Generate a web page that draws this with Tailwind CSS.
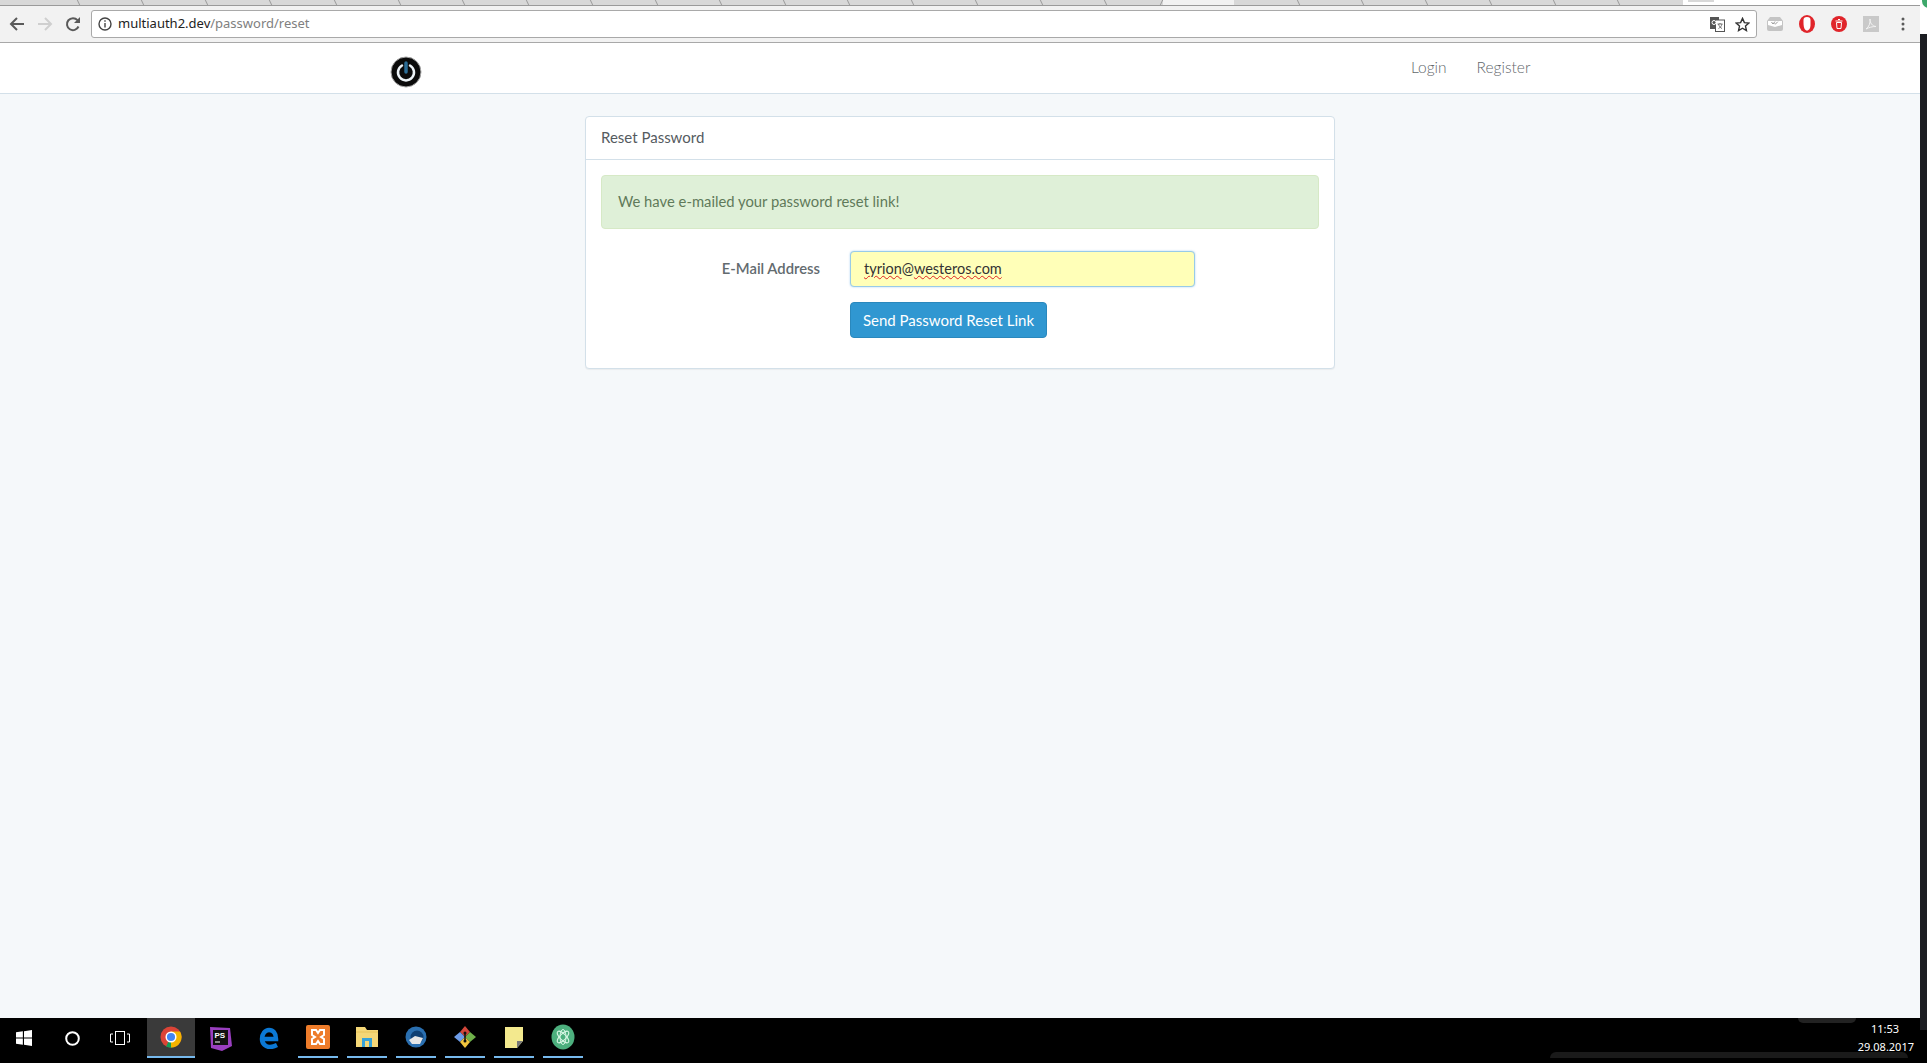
<!DOCTYPE html>
<html lang="en">
<head>
  <meta charset="UTF-8">
  <title>Reset Password</title>
  <script src="https://cdn.jsdelivr.net/npm/@tailwindcss/browser@4"></script>
</head>
<body class="h-[1063px] w-[1927px] overflow-hidden flex flex-col bg-[#f5f8fa] font-['Lato','Liberation_Sans',sans-serif]">

  <!-- Tab strip -->
  <div class="h-[6px] flex items-stretch bg-white border-b border-[#9a9a9a] shrink-0 overflow-hidden">
    <div class="w-[1163px] flex bg-[#d8d8d8] overflow-hidden">
      <div class="w-[79px] shrink-0 border-r border-[#9a9a9a] skew-x-[25deg]"></div>
      <div class="w-[64.2px] shrink-0 border-r border-[#9a9a9a] skew-x-[25deg]"></div>
      <div class="w-[64.2px] shrink-0 border-r border-[#9a9a9a] skew-x-[25deg]"></div>
      <div class="w-[64.2px] shrink-0 border-r border-[#9a9a9a] skew-x-[25deg]"></div>
      <div class="w-[64.2px] shrink-0 border-r border-[#9a9a9a] skew-x-[25deg]"></div>
      <div class="w-[64.2px] shrink-0 border-r border-[#9a9a9a] skew-x-[25deg]"></div>
      <div class="w-[64.2px] shrink-0 border-r border-[#9a9a9a] skew-x-[25deg]"></div>
      <div class="w-[64.2px] shrink-0 border-r border-[#9a9a9a] skew-x-[25deg]"></div>
      <div class="w-[64.2px] shrink-0 border-r border-[#9a9a9a] skew-x-[25deg]"></div>
      <div class="w-[64.2px] shrink-0 border-r border-[#9a9a9a] skew-x-[25deg]"></div>
      <div class="w-[64.2px] shrink-0 border-r border-[#9a9a9a] skew-x-[25deg]"></div>
      <div class="w-[64.2px] shrink-0 border-r border-[#9a9a9a] skew-x-[25deg]"></div>
      <div class="w-[64.2px] shrink-0 border-r border-[#9a9a9a] skew-x-[25deg]"></div>
      <div class="w-[64.2px] shrink-0 border-r border-[#9a9a9a] skew-x-[25deg]"></div>
      <div class="w-[64.2px] shrink-0 border-r border-[#9a9a9a] skew-x-[25deg]"></div>
      <div class="w-[64.2px] shrink-0 border-r border-[#9a9a9a] skew-x-[25deg]"></div>
      <div class="w-[64.2px] shrink-0 border-r border-[#9a9a9a] skew-x-[25deg]"></div>
      <div class="w-[56px] shrink-0 border-r border-[#9a9a9a] -skew-x-[25deg]"></div>
    </div>
    <div class="w-[71px] bg-[#f2f2f2]"></div>
    <div class="w-[449px] flex bg-[#d8d8d8] overflow-hidden">
      <div class="w-[65px] shrink-0 border-r border-[#9a9a9a] skew-x-[25deg]"></div>
      <div class="w-[64px] shrink-0 border-r border-[#9a9a9a] skew-x-[25deg]"></div>
      <div class="w-[64px] shrink-0 border-r border-[#9a9a9a] skew-x-[25deg]"></div>
      <div class="w-[64px] shrink-0 border-r border-[#9a9a9a] skew-x-[25deg]"></div>
      <div class="w-[64px] shrink-0 border-r border-[#9a9a9a] skew-x-[25deg]"></div>
      <div class="w-[64px] shrink-0 border-r border-[#9a9a9a] skew-x-[25deg]"></div>
      <div class="w-[64px] shrink-0"></div>
    </div>
    <div class="flex-1 pl-[5px]"><div class="w-[26px] h-[2px] bg-[#d8d8d8]"></div></div>
  </div>

  <!-- Browser toolbar -->
  <div class="h-[37px] shrink-0 flex items-center bg-[#f2f2f2] border-b border-[#a8a8a8]">
    <div class="w-[91px] flex items-center pl-[9px] gap-[12px]">
      <svg width="16" height="16" viewBox="0 0 16 16" fill="none" stroke="#5a5a5a" stroke-width="2"><path d="M15 8H2M8 2L2 8l6 6"/></svg>
      <svg width="16" height="16" viewBox="0 0 16 16" fill="none" stroke="#cfcfcf" stroke-width="2"><path d="M1 8h13M8 2l6 6-6 6"/></svg>
      <svg width="16" height="16" viewBox="0 0 16 16" fill="none" stroke="#5a5a5a" stroke-width="2"><path d="M13.500 10.500A6 6 0 1 1 12.500 4.200"/><path d="M15 1v6H9z" fill="#5a5a5a" stroke="none"/></svg>
    </div>
    <div class="w-[1666px] h-[28px] bg-white border border-[#a9a9a9] rounded-[3px] flex items-center pl-[6px] pr-[6px] text-[13px] font-['Noto_Sans',sans-serif]">
      <svg width="14" height="14" viewBox="0 0 14 14" fill="none" stroke="#444" stroke-width="1.400"><circle cx="7" cy="7" r="6"/><path d="M7 6v4.500M7 3.200v1.500"/></svg>
      <span class="ml-[6px] text-[#222]">multiauth2.dev</span><span class="text-[#808080]">/password/reset</span>
      <div class="ml-auto flex items-center gap-[10px]">
        <svg width="15" height="15" viewBox="0 0 15 15"><rect x="0" y="0" width="9" height="12" fill="#555"/><rect x="5.500" y="3" width="9" height="11.500" fill="#fff" stroke="#555"/><path d="M7.500 7h5M10 6v1M8.500 7c.5 2 2 4 3.500 4.500M12 7c-.5 2-2 4-3.500 4.500" stroke="#555" stroke-width=".8" fill="none"/><circle cx="4" cy="5.500" r="2" fill="none" stroke="#fff"/></svg>
        <svg width="15" height="15" viewBox="0 0 16 16" fill="none" stroke="#333" stroke-width="1.500"><path d="M8 1.500l2 4.500 4.800.5-3.600 3.200 1 4.800L8 12l-4.200 2.500 1-4.800L1.200 6.500 6 6z"/></svg>
      </div>
    </div>
    <div class="w-[163px] flex items-center pl-[10px] gap-[16px]">
      <svg width="16" height="16" viewBox="0 0 16 16"><path d="M0 5l3-4h10l3 4v8a2 2 0 0 1-2 2H2a2 2 0 0 1-2-2z" fill="#c4c4c4"/><path d="M1 5h14v4l-7 2-7-2z" fill="#fff"/><path d="M4.500 6l1.500 2 2-2.500M7.500 7.500l.8.7 2.500-2.500" stroke="#999" fill="none"/></svg>
      <svg width="16" height="18" viewBox="0 0 16 18"><ellipse cx="8" cy="9" rx="8" ry="9" fill="#e0252b"/><path d="M4.500 8V5c0-2 1-3 3.500-3s3.500 1 3.500 3v5c0 3-1.500 5.500-3.500 5.500S4.500 13 4.500 8z" fill="#fff"/></svg>
      <svg width="16" height="16" viewBox="0 0 16 16"><circle cx="8" cy="8" r="8" fill="#e0252b"/><path d="M5.500 6.500h5l-.5 6H6zM4.500 5h7M7 3.500h2" stroke="#fff" fill="none"/></svg>
      <svg width="16" height="16" viewBox="0 0 16 16"><rect width="16" height="16" fill="#c9c9c9"/><path d="M3 13c3-2 4.500-6 4-10 0 4 2 7 6 7.500-4 0-7 1-10 2.500z" fill="none" stroke="#f2f2f2"/></svg>
      <svg class="ml-[6px]" width="4" height="14" viewBox="0 0 4 14" fill="#5a5a5a"><circle cx="2" cy="2" r="1.500"/><circle cx="2" cy="7" r="1.500"/><circle cx="2" cy="12" r="1.500"/></svg>
    </div>
  </div>

  <!-- Navbar -->
  <nav class="h-[51px] shrink-0 bg-white border-b border-[#d3e0e9] flex items-center relative">
    <div class="pl-[390px] pt-[8px]">
      <svg class="block" width="32" height="32" viewBox="0 0 32 32" fill="none">
        <circle cx="16" cy="16" r="15" fill="#0b0b0b" stroke="#a5a5a5" stroke-width="1"/>
        <path d="M12 9.500a8 8 0 1 0 8 0" stroke="#eef4f8" stroke-width="2.500" stroke-linecap="round"/>
        <path d="M16 7v9" stroke="#2b6d96" stroke-width="3.500" stroke-linecap="round"/>
      </svg>
    </div>
    <div class="absolute top-[13px] left-[1411px] flex gap-[30px] text-[15.500px] font-light text-[#62676b]">
      <span>Login</span>
      <span>Register</span>
    </div>
  </nav>

  <!-- Content -->
  <main class="flex-1 pt-[22px]">
    <div class="w-[750px] ml-[585px] bg-white border border-[#d3e0e9] rounded-[4px] shadow-[0_1px_1px_rgba(0,0,0,0.05)] text-[#636b6f]">
      <div class="h-[43px] px-[15px] pb-[2px] flex items-center border-b border-[#d3e0e9] text-[15px] text-[#555b5f]">Reset Password</div>
      <div class="px-[15px] pt-[15px] pb-[30px]">
        <div class="h-[54px] px-[16px] pb-[2px] flex items-center bg-[#dff0d8] border border-[#d6e9c6] rounded-[4px] text-[14.800px] text-[#5f7a5a]">We have e-mailed your password reset link!</div>
        <div class="mt-[22px] flex items-center">
          <label class="w-[219px] pb-[2px] text-right text-[14.800px] font-semibold text-[#636b6f]">E-Mail Address</label>
          <div class="ml-[30px] w-[345px] h-[36px] px-[13px] flex items-center bg-[#ffffb8] border border-[#98cbe8] rounded-[4px] shadow-[0_0_2px_rgba(102,175,233,0.6)] text-[14.500px] text-[#333]">
            <span class="underline decoration-wavy decoration-[#d22] decoration-1 underline-offset-1">tyrion</span><span>@</span><span class="underline decoration-wavy decoration-[#d22] decoration-1 underline-offset-1">westeros.com</span>
          </div>
        </div>
        <div class="mt-[15px] ml-[249px]">
          <button class="h-[36px] w-[197px] bg-[#3097d1] border border-[#2a88bd] rounded-[4px] text-white text-[15px]">Send Password Reset Link</button>
        </div>
      </div>
    </div>
  </main>

  <!-- Taskbar -->
  <div class="h-[45px] shrink-0 bg-black relative">
    <!-- smudges left in the bar -->
    <div class="absolute top-0 left-[1798px] w-[58px] h-[5px] bg-[#222] rounded-b-[6px]"></div>
    <div class="absolute bottom-[5px] left-[1550px] w-[358px] h-[6px] bg-[#1a1a1a] rounded-t-[6px]"></div>

    <div class="h-[40px] flex items-stretch">
      <div class="w-[147px] flex items-center pl-[16px]">
        <svg width="16" height="16" viewBox="0 0 14 14" fill="#fff"><path d="M0 2l6-.9V6.500H0zM7 1l7-1v6.500H7zM0 7.500h6v5.400l-6-.9zM7 7.500h7V14l-7-1z"/></svg>
        <svg class="ml-[33px]" width="15" height="15" viewBox="0 0 15 15" fill="none" stroke="#fff" stroke-width="2"><circle cx="7.500" cy="7.500" r="6.300"/></svg>
        <svg class="ml-[30px]" width="20" height="16" viewBox="0 0 20 16" fill="none" stroke="#fff"><rect x="5.500" y="1.500" width="9" height="13"/><path d="M3 4H.5v8H3M17 4h2.500v8H17"/></svg>
      </div>
      <div class="w-[48px] bg-[#3a3a3a] border-b-2 border-[#76b9ed] flex items-center justify-center">
        <svg width="22" height="22" viewBox="0 0 22 22"><circle cx="11" cy="11" r="10.500" fill="#db4437"/><path d="M11 11L20 16A10.500 10.500 0 0 1 6 20.500z" fill="#0f9d58"/><path d="M11 5.500h9A10.500 10.500 0 0 1 11 21.500z" fill="#f4b400"/><circle cx="11" cy="11" r="4.800" fill="#4285f4" stroke="#fff" stroke-width="1.500"/></svg>
      </div>
      <div class="w-[50px] flex items-center justify-center">
        <svg width="23" height="26" viewBox="0 0 23 26"><path d="M1 2l20 1 2 18-10 5-11-3z" fill="#9a3fc0"/><rect x="4" y="5" width="15" height="15" fill="#111"/><text x="5.500" y="13" font-size="8" font-weight="700" fill="#fff" font-family="Liberation Sans, sans-serif">PS</text><path d="M6 17h5" stroke="#fff"/></svg>
      </div>
      <div class="w-[48px] flex items-center justify-center">
        <svg width="20" height="22" viewBox="0 0 20 22" fill="none" stroke="#0b78d4" stroke-width="4.500"><path d="M3 12h14C17 6 14 3 10 3 6 3 3 7 3 12c0 5 4 8 8 8 2 0 4-.500 7-2"/></svg>
      </div>
      <div class="w-[40px] ml-[5px] border-b-2 border-[#76b9ed] flex items-center justify-center">
        <svg width="24" height="24" viewBox="0 0 24 24"><rect width="24" height="24" rx="2" fill="#ee7c2a"/><path d="M6 5h4l2 3 2-3h4v5l-3 2 3 2v5h-4l-2-3-2 3H6v-5l3-2-3-2z" fill="none" stroke="#fff" stroke-width="2"/></svg>
      </div>
      <div class="w-[40px] ml-[9px] border-b-2 border-[#76b9ed] flex items-center justify-center">
        <svg width="22" height="20" viewBox="0 0 22 20"><path d="M0 0h9l2 3h11v17H0z" fill="#f5d777"/><path d="M0 5h22" stroke="#e8c35a"/><rect x="6" y="11" width="10" height="9" fill="#38a3d8"/><rect x="9" y="14" width="4" height="6" fill="#f5d777"/></svg>
      </div>
      <div class="w-[40px] ml-[9px] border-b-2 border-[#76b9ed] flex items-center justify-center">
        <svg width="22" height="22" viewBox="0 0 22 22"><circle cx="11" cy="11" r="10.500" fill="#2a6fb0"/><circle cx="12" cy="11" r="6.500" fill="#0e3f73"/><path d="M4 14l6-4 8 2-3 6H7z" fill="#e6e6e6"/></svg>
      </div>
      <div class="w-[40px] ml-[9px] border-b-2 border-[#76b9ed] flex items-center justify-center">
        <svg width="24" height="24" viewBox="0 0 24 24"><path d="M12 1l5 6-5 5-5-5z" fill="#d2463a"/><path d="M1 12l6-5 5 5-5 5z" fill="#6d9ce8"/><path d="M17 7l6 5-6 5-5-5z" fill="#6fb04a"/><path d="M12 12l5 5-5 6-5-6z" fill="#f2c53d"/><circle cx="12" cy="8" r="1.500" fill="#111"/><circle cx="12" cy="16" r="1.500" fill="#111"/><path d="M12 8v8" stroke="#111" stroke-width="1.500"/></svg>
      </div>
      <div class="w-[40px] ml-[9px] border-b-2 border-[#76b9ed] flex items-center justify-center">
        <svg width="18" height="21" viewBox="0 0 18 21"><path d="M0 0h18v14l-6 7H0z" fill="#f3e98e"/><path d="M18 14h-6v7z" fill="#777"/></svg>
      </div>
      <div class="w-[40px] ml-[9px] border-b-2 border-[#76b9ed] flex items-center justify-center">
        <svg width="24" height="26" viewBox="0 0 24 26" fill="none"><ellipse cx="12" cy="13" rx="11.500" ry="12.500" fill="#4caf7d"/><ellipse cx="12" cy="13" rx="3" ry="7.500" stroke="#d6f5e3"/><ellipse cx="12" cy="13" rx="7.500" ry="3" stroke="#d6f5e3" transform="rotate(45 12 13)"/><ellipse cx="12" cy="13" rx="7.500" ry="3" stroke="#d6f5e3" transform="rotate(-45 12 13)"/></svg>
      </div>
    </div>
    <div class="absolute top-[2px] right-[13px] flex flex-col items-end text-white text-[11px] leading-[18px] font-['Noto_Sans',sans-serif]">
      <span class="mr-[15px]">11:53</span>
      <span>29.08.2017</span>
    </div>
  </div>

  <!-- Right window edge -->
  <div class="absolute top-0 right-0 w-[7px] h-[34px] bg-white overflow-hidden">
    <div class="ml-[2px] -mt-[8px] w-[14px] h-[16px] rounded-full bg-[#3da86b]"></div>
  </div>
  <div class="absolute top-[34px] right-0 w-[7px] h-[996px] bg-[#1c1e22]"></div>

</body>
</html>
